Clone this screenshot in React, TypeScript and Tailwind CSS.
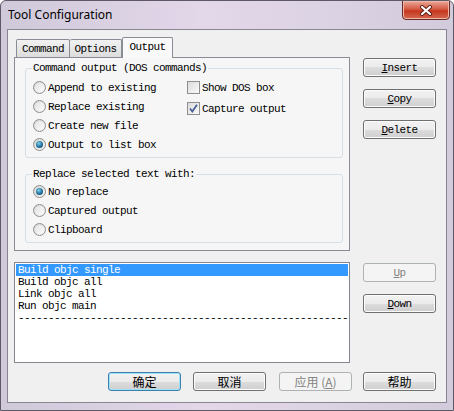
import React from 'react'

const mono = "font-['Liberation_Mono',monospace] text-[11px] leading-[12px] tracking-[-0.6px] text-black"

function Radio({ checked, label }: { checked?: boolean; label: string }) {
  return (
    <div className="flex h-[19px] items-center gap-[2px]">
      <span className="flex h-[13px] w-[13px] items-center justify-center rounded-full border border-[#8e8f8f] bg-[linear-gradient(135deg,#d4d4d4,#f7f7f7)]">
        {checked ? (
          <span className="h-[7px] w-[7px] rounded-full bg-[radial-gradient(circle_at_40%_35%,#7fd3ee,#1f6e98_55%,#123f5e)]" />
        ) : (
          <span className="h-[9px] w-[9px] rounded-full bg-[linear-gradient(135deg,#e2e2e2,#fbfbfb)]" />
        )}
      </span>
      <span className={mono}>{label}</span>
    </div>
  )
}

function Check({ checked, label }: { checked?: boolean; label: string }) {
  return (
    <div className="flex h-[19px] items-center gap-[2px]">
      <span className="flex h-[13px] w-[13px] items-center justify-center border border-[#8e8f8f] bg-[linear-gradient(135deg,#dcdcdc,#fafafa)]">
        {checked && (
          <svg width="11" height="11" viewBox="0 0 11 11">
            <path d="M2 5.5 L4.3 8.5 L9 1.8" fill="none" stroke="#4a5f97" strokeWidth="1.8" />
          </svg>
        )}
      </span>
      <span className={mono}>{label}</span>
    </div>
  )
}

function Btn({
  children,
  disabled,
  primary,
  className = '',
  cjk,
}: {
  children: React.ReactNode
  disabled?: boolean
  primary?: boolean
  className?: string
  cjk?: boolean
}) {
  const look = disabled
    ? 'border-[#adb2b5] bg-[#f4f4f4] text-[#838383]'
    : primary
      ? 'border-[#3c7fb1] shadow-[inset_0_0_0_1px_#9fe3f8] bg-[linear-gradient(to_bottom,#f2f2f2_0%,#ebebeb_50%,#dddddd_50%,#cfcfcf_100%)] text-black'
      : 'border-[#707070] shadow-[inset_0_0_0_1px_#fcfcfc] bg-[linear-gradient(to_bottom,#f2f2f2_0%,#ebebeb_50%,#dddddd_50%,#cfcfcf_100%)] text-black'
  const font = cjk
    ? "font-['Noto_Sans_CJK_SC',sans-serif] text-[12px] leading-[14px]"
    : "font-['Liberation_Mono',monospace] text-[11px] leading-[12px] tracking-[-0.6px]"
  return (
    <div className={`flex h-[19px] w-[73px] items-center justify-center rounded-[3px] border ${look} ${font} ${className}`}>
      {children}
    </div>
  )
}

export default function App() {
  const items = ['Build objc single', 'Build objc all', 'Link objc all', 'Run objc main']

  return (
    <div className="flex h-[411px] w-[454px] flex-col overflow-hidden rounded-t-[6px] border border-[#5d5966] bg-[linear-gradient(to_right,#cfc9da,#e3d7ea_45%,#dcd3e4_70%,#d2cbdc)]">
      {/* Title bar */}
      <div className="flex h-[28px] shrink-0 items-start justify-between">
        <span className="pl-[7px] pt-[6px] font-['Noto_Sans',sans-serif] text-[12px] leading-[16px] text-black">
          Tool Configuration
        </span>
        <div className="-mt-px mr-[3px] flex h-[20px] w-[48px] items-center justify-center rounded-b-[4px] border border-[#6b2b24] bg-[linear-gradient(to_bottom,#e9a99b,#d55a42_45%,#c7361f_55%,#d46a4f)] shadow-[inset_0_0_0_1px_#f0b8a8]">
          <svg width="14" height="11" viewBox="0 0 14 11">
            <path d="M3 2 L11 9 M11 2 L3 9" stroke="#5a1e16" strokeWidth="4" strokeLinecap="round" />
            <path d="M3 2 L11 9 M11 2 L3 9" stroke="#ffffff" strokeWidth="2.2" strokeLinecap="round" />
          </svg>
        </div>
      </div>

      {/* Client area */}
      <div className="mx-[6px] flex h-[374px] shrink-0 flex-col border border-[#8a8592] bg-[#f0f0f0]">
        <div className="flex pl-[6px] pt-[7px]">
          {/* Left column */}
          <div className="flex w-[336px] flex-col">
            {/* Tabs */}
            <div className="flex h-[20px] items-end pl-[2px]">
              <div className={`flex h-[18px] w-[54px] items-center justify-center rounded-t-[2px] border border-b-0 border-[#898c95] bg-[linear-gradient(to_bottom,#f2f2f2,#dcdcdc)] ${mono}`}>
                Command
              </div>
              <div className={`flex h-[18px] w-[52px] items-center justify-center rounded-t-[2px] border border-b-0 border-l-0 border-[#898c95] bg-[linear-gradient(to_bottom,#f2f2f2,#dcdcdc)] ${mono}`}>
                Options
              </div>
              <div className={`relative z-10 -mb-px flex h-[21px] w-[51px] items-start justify-center rounded-t-[2px] border border-b-0 border-[#898c95] bg-[#f9f9f9] pt-[3px] ${mono}`}>
                Output
              </div>
            </div>

            {/* Panel */}
            <div className="flex h-[194px] flex-col border border-[#898c95] bg-[#f6f6f6] pl-[10px] pr-[6px] pt-[4px]">
              <fieldset className="rounded-[3px] border border-[#d5dfe5] px-[7px] pb-[3px] pt-[4px]">
                <legend className={`-ml-px px-[1px] ${mono}`}>Command output (DOS commands)</legend>
                <div className="flex">
                  <div className="flex w-[154px] flex-col">
                    <Radio label="Append to existing" />
                    <Radio label="Replace existing" />
                    <Radio label="Create new file" />
                    <Radio checked label="Output to list box" />
                  </div>
                  <div className="flex flex-col">
                    <Check label="Show DOS box" />
                    <div className="mt-[2px]">
                      <Check checked label="Capture output" />
                    </div>
                  </div>
                </div>
              </fieldset>

              <fieldset className="mt-[10px] rounded-[3px] border border-[#d5dfe5] px-[7px] pb-[3px] pt-[2px]">
                <legend className={`-ml-px px-[1px] ${mono}`}>Replace selected text with:</legend>
                <Radio checked label="No replace" />
                <Radio label="Captured output" />
                <Radio label="Clipboard" />
              </fieldset>
            </div>

            {/* List box */}
            <div className="mt-[11px] h-[101px] overflow-hidden border border-[#828790] bg-white p-px">
              {items.map((t, i) => (
                <div
                  key={t}
                  className={`h-[12px] whitespace-nowrap pl-[2px] ${mono} ${i === 0 ? 'bg-[#3399ff]' : ''}`}
                >
                  <span className={i === 0 ? 'text-white' : ''}>{t}</span>
                </div>
              ))}
              <div className={`h-[12px] whitespace-nowrap pl-[2px] ${mono}`}>{'-'.repeat(55)}</div>
            </div>
          </div>

          {/* Right column */}
          <div className="ml-[13px] flex flex-col pt-[21px]">
            <Btn>
              <u>I</u>nsert
            </Btn>
            <Btn className="mt-[12px]">
              <u>C</u>opy
            </Btn>
            <Btn className="mt-[12px]">
              <u>D</u>elete
            </Btn>
            <Btn disabled className="mt-[124px]">
              <u>U</u>p
            </Btn>
            <Btn className="mt-[12px]">
              <u>D</u>own
            </Btn>
          </div>
        </div>

        {/* Bottom buttons */}
        <div className="mt-[9px] flex pl-[100px]">
          <Btn primary cjk>
            确定
          </Btn>
          <Btn cjk className="ml-[12px]">
            取消
          </Btn>
          <Btn cjk disabled className="ml-[13px]">
            应用 (<u>A</u>)
          </Btn>
          <Btn cjk className="ml-[11px]">
            帮助
          </Btn>
        </div>
      </div>
    </div>
  )
}
